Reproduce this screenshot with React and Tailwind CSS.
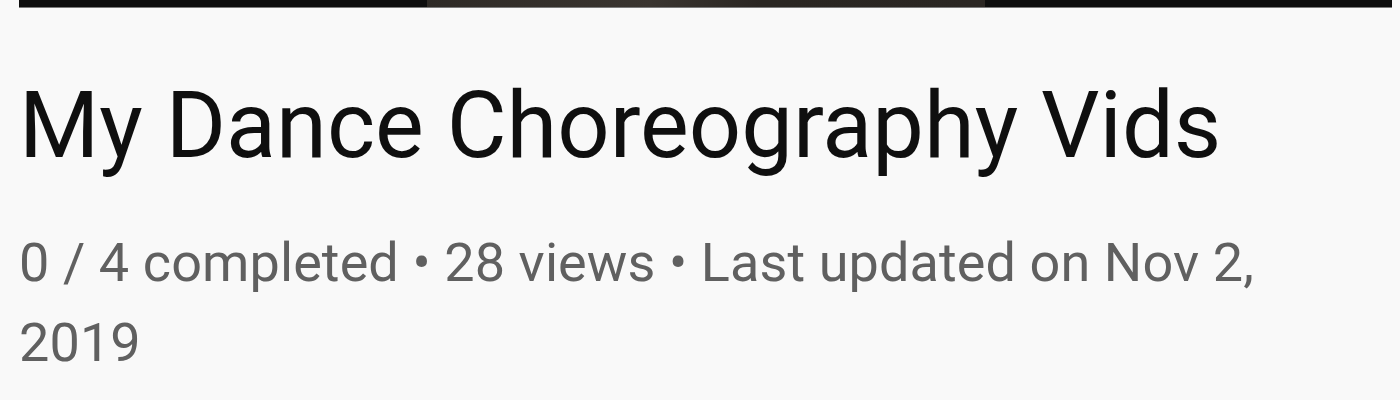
export default function App() {
  return (
    <div
      className="w-[1400px] h-[400px] bg-[#f9f9f9] overflow-hidden"
      style={{ fontFamily: "Roboto, 'Liberation Sans', sans-serif" }}
    >
      <div className="pl-[19px] pr-[8px]">
        {/* bottom edge of the playlist thumbnail */}
        <div className="h-[8px] w-[1373px] flex bg-[#0e0e0e] border-b border-[#7a7a7a]">
          <div className="w-[408px]" />
          <div className="w-[558px] bg-[linear-gradient(90deg,#2e2a26,#3a3530_40%,#2a2622_60%,#2b2723)]" />
          <div className="flex-1" />
        </div>
        <h1 className="mt-[63px] text-[92px] leading-[110px] text-[#0f0f0f] font-normal">
          My Dance Choreography Vids
        </h1>
        <p className="mt-[42px] text-[54px] leading-[80px] text-[#606060] w-[1290px] tracking-[0.1px]">
          0 / 4 completed • 28 views • Last updated on Nov 2, 2019
        </p>
      </div>
    </div>
  );
}
